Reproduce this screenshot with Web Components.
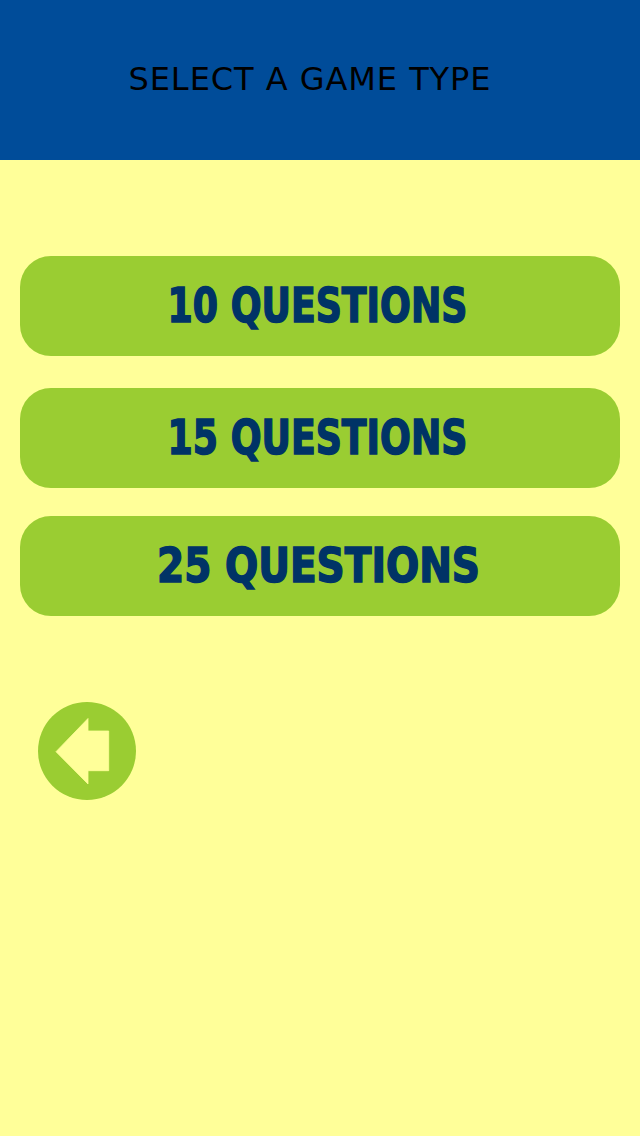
<!DOCTYPE html>
<html>
<head>
<meta charset="utf-8">
<title>Select a game type</title>
<style>
  html, body {
    margin: 0;
    height: 100%;
    background-color: #ffff99;
  }
</style>
</head>
<body>
<game-screen>
  <game-header slot="header">SELECT A GAME TYPE</game-header>
  <game-option>10 QUESTIONS</game-option>
  <game-option style="margin-top: 32px">15 QUESTIONS</game-option>
  <game-option style="margin-top: 28px; --squeeze: 0.905; --nudge: -3px">25 QUESTIONS</game-option>
  <back-button slot="footer"></back-button>
</game-screen>

<script>
class GameScreen extends HTMLElement {
  constructor() {
    super();
    this.attachShadow({ mode: 'open' });
    this.shadowRoot.innerHTML = `
    <style>
      :host {
        display: block;
        min-height: 1136px;
        background-color: #ffff99;
      }

      .options {
        display: flex;
        flex-direction: column;
        padding: 96px 20px 0;
      }

      .footer {
        padding: 86px 0 0 38px;
      }
    </style>
    <slot name="header"></slot>
    <div class="options"><slot></slot></div>
    <div class="footer"><slot name="footer"></slot></div>
    `;
  }
}

class GameHeader extends HTMLElement {
  constructor() {
    super();
    this.attachShadow({ mode: 'open' });
    this.shadowRoot.innerHTML = `
    <style>
      :host {
        display: flex;
        align-items: center;
        justify-content: center;
        box-sizing: border-box;
        height: 160px;
        padding: 0 20px 3px 0;
        background-color: #004c99;
        color: #000;
        font: 32px "DejaVu Sans", sans-serif;
        letter-spacing: 0.95px;
      }
    </style>
    <slot></slot>
    `;
  }
}

class GameOption extends HTMLElement {
  constructor() {
    super();
    this.attachShadow({ mode: 'open' });
    this.shadowRoot.innerHTML = `
    <style>
      :host {
        display: flex;
        align-items: center;
        justify-content: center;
        height: 100px;
        border-radius: 31px;
        background-color: #9acd32;
        color: #003366;
        font: bold 48px "DejaVu Sans Condensed", "DejaVu Sans", sans-serif;
        -webkit-text-stroke: 1.5px #003366;
        cursor: pointer;
      }

      .label {
        display: inline-block;
        margin-left: var(--nudge, -6px);
        margin-top: -2px;
        white-space: nowrap;
        transform: scaleX(var(--squeeze, 0.84));
      }
    </style>
    <span class="label"><slot></slot></span>
    `;
  }
}

class BackButton extends HTMLElement {
  constructor() {
    super();
    this.attachShadow({ mode: 'open' });
    this.shadowRoot.innerHTML = `
    <style>
      :host {
        display: block;
        width: 98px;
        height: 98px;
        cursor: pointer;
      }

      svg {
        display: block;
      }
    </style>
    <svg width="98" height="98" viewBox="0 0 98 98">
      <circle cx="49" cy="49" r="49" fill="#9acd32"/>
      <path d="M18 49.7 50 16.5V29H70.7V68.7H50V82Z" fill="#ffff99" stroke="#ffff99" stroke-width="0.8" stroke-linejoin="round"/>
    </svg>
    `;
  }
}

window.customElements.define('game-screen', GameScreen);
window.customElements.define('game-header', GameHeader);
window.customElements.define('game-option', GameOption);
window.customElements.define('back-button', BackButton);
</script>
</body>
</html>
